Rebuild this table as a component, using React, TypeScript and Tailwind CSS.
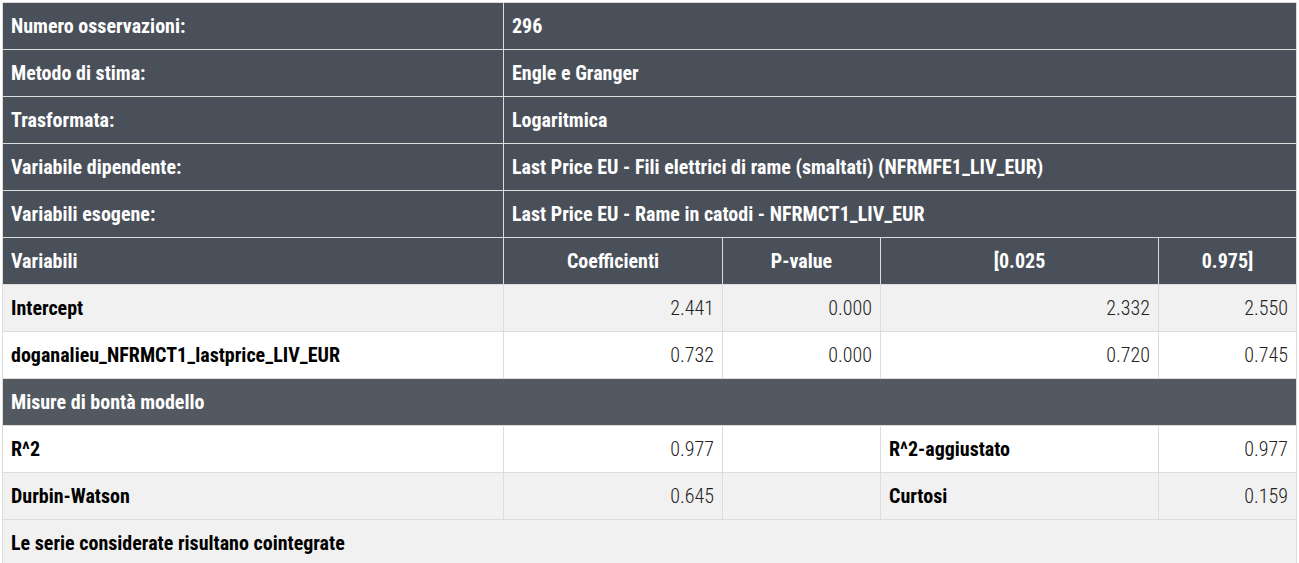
const dark = "bg-[#4a5059] text-white border-[#7a7e84]";

type Row = { label: string; value: string };

const info: Row[] = [
  { label: "Numero osservazioni:", value: "296" },
  { label: "Metodo di stima:", value: "Engle e Granger" },
  { label: "Trasformata:", value: "Logaritmica" },
  { label: "Variabile dipendente:", value: "Last Price EU - Fili elettrici di rame (smaltati) (NFRMFE1_LIV_EUR)" },
  { label: "Variabili esogene:", value: "Last Price EU - Rame in catodi - NFRMCT1_LIV_EUR" },
];

const coeffs = [
  { name: "Intercept", vals: ["2.441", "0.000", "2.332", "2.550"], bg: "bg-[#f1f1f1]" },
  { name: "doganalieu_NFRMCT1_lastprice_LIV_EUR", vals: ["0.732", "0.000", "0.720", "0.745"], bg: "bg-white" },
];

const td = "h-[47px] px-2 border border-[#dcdcdc] align-middle";
const num = "text-right font-light text-[#222]";

export default function App() {
  return (
    <div className="w-[1299px] h-[563px] bg-white pt-[2px] pl-[2px] overflow-hidden font-['Roboto_Condensed','Roboto',sans-serif] text-[20px] leading-6">
      <table className="w-[1294px] border-collapse table-fixed">
        <colgroup>
          <col className="w-[501px]" />
          <col className="w-[219px]" />
          <col className="w-[158px]" />
          <col className="w-[278px]" />
          <col className="w-[138px]" />
        </colgroup>
        <tbody>
          {info.map((r) => (
            <tr key={r.label} className={dark}>
              <td className={`${td} ${dark} font-bold`}>{r.label}</td>
              <td colSpan={4} className={`${td} ${dark} font-bold`}>{r.value}</td>
            </tr>
          ))}
          <tr className={dark}>
            <td className={`${td} ${dark} font-bold`}>Variabili</td>
            <td className={`${td} ${dark} font-bold text-center`}>Coefficienti</td>
            <td className={`${td} ${dark} font-bold text-center`}>P-value</td>
            <td className={`${td} ${dark} font-bold text-center`}>[0.025</td>
            <td className={`${td} ${dark} font-bold text-center`}>0.975]</td>
          </tr>
          {coeffs.map((c) => (
            <tr key={c.name} className={c.bg}>
              <td className={`${td} font-bold text-black`}>{c.name}</td>
              {c.vals.map((v, i) => (
                <td key={i} className={`${td} ${num}`}>{v}</td>
              ))}
            </tr>
          ))}
          <tr>
            <td colSpan={5} className={`${td} bg-[#535960] text-white border-[#535960] font-bold`}>Misure di bontà modello</td>
          </tr>
          <tr className="bg-white">
            <td className={`${td} font-bold text-black`}>R^2</td>
            <td className={`${td} ${num}`}>0.977</td>
            <td className={td}></td>
            <td className={`${td} font-bold text-black`}>R^2-aggiustato</td>
            <td className={`${td} ${num}`}>0.977</td>
          </tr>
          <tr className="bg-[#f1f1f1]">
            <td className={`${td} font-bold text-black`}>Durbin-Watson</td>
            <td className={`${td} ${num}`}>0.645</td>
            <td className={td}></td>
            <td className={`${td} font-bold text-black`}>Curtosi</td>
            <td className={`${td} ${num}`}>0.159</td>
          </tr>
          <tr className="bg-[#f1f1f1]">
            <td colSpan={5} className={`${td} font-bold text-black`}>Le serie considerate risultano cointegrate</td>
          </tr>
        </tbody>
      </table>
    </div>
  );
}
